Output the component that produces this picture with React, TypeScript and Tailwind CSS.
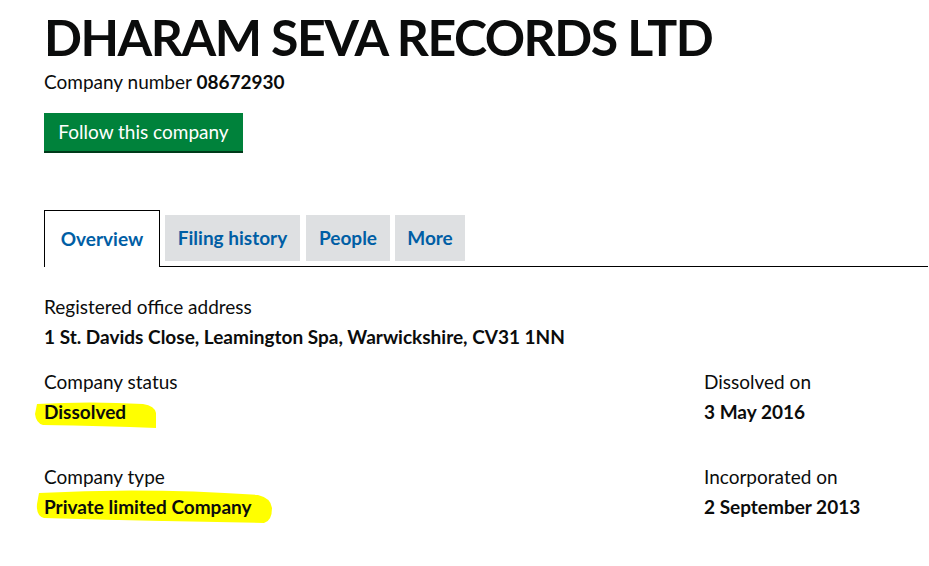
import React from "react";

const font = { fontFamily: "Lato, 'Liberation Sans', sans-serif" };

function Marker({ kind }: { kind: "short" | "long" }) {
  if (kind === "short") {
    return (
      <svg
        className="absolute left-[-9px] top-[4px] -z-10"
        width="122"
        height="27"
        viewBox="0 0 122 27"
      >
        <path
          d="M2 3 Q55 0 108 3 Q120 5 121 12 L121 27 Q70 25 8 24 Q1 22 0 13 Z"
          fill="#ffff00"
        />
      </svg>
    );
  }
  return (
    <svg
      className="absolute left-[-8px] top-[-4px] -z-10"
      width="236"
      height="35"
      viewBox="0 0 236 35"
    >
      <path
        d="M3 5 Q110 -1 222 7 Q235 10 236 20 Q236 33 228 35 Q120 33 8 30 Q0 28 1 16 Z"
        fill="#ffff00"
      />
    </svg>
  );
}

function Field({
  label,
  value,
  marker,
}: {
  label: string;
  value: string;
  marker?: "short" | "long";
}) {
  return (
    <div className="flex flex-col">
      <span className="text-[19px] leading-[30px] text-[#0b0c0c]">{label}</span>
      <span className="relative isolate text-[19px] leading-[30px] font-bold text-[#0b0c0c] w-fit">
        {marker && <Marker kind={marker} />}
        {value}
      </span>
    </div>
  );
}

export default function App() {
  return (
    <div className="bg-white w-[929px] h-[566px] overflow-hidden pl-[44px]" style={font}>
      <h1 className="text-[50px] leading-[52px] tracking-[-1.5px] font-bold text-[#0b0c0c] pt-[11px]">
        DHARAM SEVA RECORDS LTD
      </h1>
      <p className="text-[19px] leading-[30px] text-[#0b0c0c] mt-[4px]">
        Company number <span className="font-bold">08672930</span>
      </p>

      <button className="mt-[16px] w-[199px] h-[40px] bg-[#00823b] border-b-2 border-[#003a1a] text-white text-[19px] flex items-center justify-center">
        Follow this company
      </button>

      <div className="mt-[57px] mr-px flex items-start border-b border-black h-[57px]">
        <div className="h-[57px] w-[116px] border border-b-0 border-black bg-white flex items-center justify-center text-[19px] font-bold text-[#005ea5]">
          Overview
        </div>
        <div className="ml-[5px] mt-[5px] h-[46px] w-[135px] bg-[#dee0e2] flex items-center justify-center text-[19px] font-bold text-[#005ea5]">
          Filing history
        </div>
        <div className="ml-[6px] mt-[5px] h-[46px] w-[84px] bg-[#dee0e2] flex items-center justify-center text-[19px] font-bold text-[#005ea5]">
          People
        </div>
        <div className="ml-[5px] mt-[5px] h-[46px] w-[70px] bg-[#dee0e2] flex items-center justify-center text-[19px] font-bold text-[#005ea5]">
          More
        </div>
      </div>

      <div className="mt-[25px]">
        <Field
          label="Registered office address"
          value="1 St. Davids Close, Leamington Spa, Warwickshire, CV31 1NN"
        />
      </div>

      <div className="mt-[15px] flex">
        <div className="w-[660px] flex flex-col gap-[35px]">
          <Field label="Company status" value="Dissolved" marker="short" />
          <Field label="Company type" value="Private limited Company" marker="long" />
        </div>
        <div className="flex flex-col gap-[35px]">
          <Field label="Dissolved on" value="3 May 2016" />
          <Field label="Incorporated on" value="2 September 2013" />
        </div>
      </div>
    </div>
  );
}
